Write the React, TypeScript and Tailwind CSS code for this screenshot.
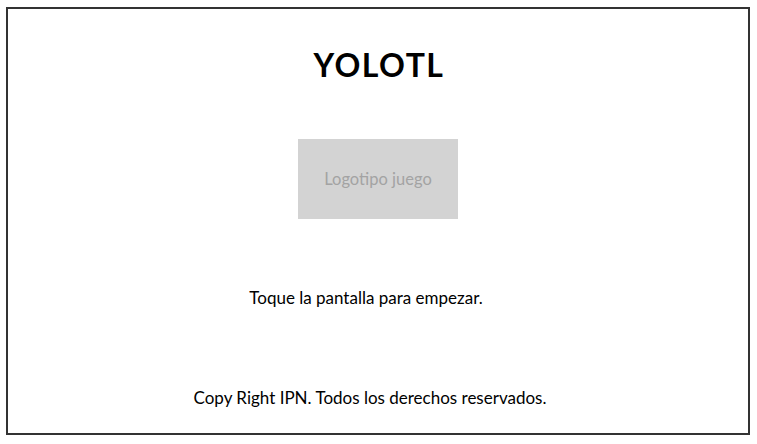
export default function App() {
  return (
    <div className="h-[444px] w-[757px] bg-white pl-[6px] pt-[7px] font-['Comic_Sans_MS','Lato',sans-serif] text-black">
      <div className="flex h-[428px] w-[744px] flex-col items-center border-2 border-[#333333]">
        <h1 className="mt-[36px] pl-[2px] text-[32px] font-bold leading-[40px] tracking-[1.5px]">YOLOTL</h1>
        <div className="mt-[54px] flex h-[80px] w-[160px] items-center justify-center bg-[#d3d3d3] text-[16.5px] text-[#a3a3a3]">
          Logotipo juego
        </div>
        <p className="mt-[69px] pr-[24px] text-[17px] leading-[20px]">Toque la pantalla para empezar.</p>
        <p className="mt-[80px] pr-[16px] text-[17px] leading-[20px]">Copy Right IPN. Todos los derechos reservados.</p>
      </div>
    </div>
  );
}
